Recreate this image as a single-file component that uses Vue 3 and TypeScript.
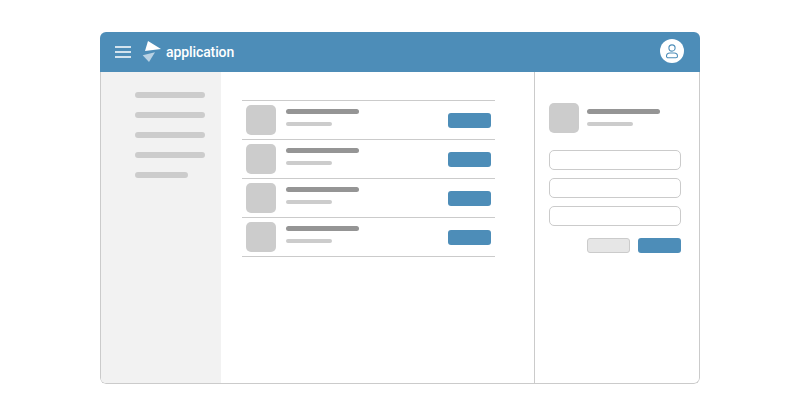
<script setup lang="ts">
const navItems: number[] = [70, 70, 70, 70, 53];
const rows: number[] = [1, 2, 3, 4];
const fields: number[] = [1, 2, 3];
</script>

<template>
  <div class="page">
    <div class="window">
      <header class="topbar">
        <div class="brand">
          <svg class="menu" width="16" height="12" viewBox="0 0 16 12" aria-hidden="true">
            <path d="M0 1h16M0 6h16M0 11h16" stroke="#fff" stroke-width="1.6" fill="none" />
          </svg>
          <svg class="logo" width="20" height="22" viewBox="0 0 20 22" aria-hidden="true">
            <path d="M6 0 L19 8 L3 10 Z" fill="#fff" />
            <path d="M0.7 14.3 L13 11.3 L7 21 Z" fill="#b8d2e4" />
          </svg>
          <span class="name">application</span>
        </div>
        <div class="avatar">
          <svg width="14" height="15" viewBox="0 0 14 15" aria-hidden="true">
            <circle cx="7" cy="4" r="3.1" fill="none" stroke="#4d8db8" stroke-width="1.1" />
            <path d="M1.5 12.2c0-2 1.6-3.2 3.4-3.2h4.2c1.8 0 3.4 1.2 3.4 3.2 0 1-.8 1.6-1.6 1.6H3.1c-.8 0-1.6-.6-1.6-1.6z" fill="none" stroke="#4d8db8" stroke-width="1.1" stroke-linejoin="round" />
          </svg>
        </div>
      </header>
      <div class="body">
        <aside class="sidebar">
          <span v-for="(w, i) in navItems" :key="i" class="nav-bar" :style="{ width: w + 'px' }"></span>
        </aside>
        <main class="content">
          <div class="list">
            <div v-for="r in rows" :key="r" class="row">
              <div class="thumb"></div>
              <div class="lines">
                <span class="line-title"></span>
                <span class="line-sub"></span>
              </div>
              <span class="btn primary"></span>
            </div>
          </div>
        </main>
        <section class="panel">
          <div class="profile">
            <div class="thumb"></div>
            <div class="lines">
              <span class="line-title"></span>
              <span class="line-sub"></span>
            </div>
          </div>
          <div class="fields">
            <div v-for="f in fields" :key="f" class="field"></div>
          </div>
          <div class="actions">
            <span class="btn secondary"></span>
            <span class="btn primary"></span>
          </div>
        </section>
      </div>
    </div>
  </div>
</template>

<style>
html, body { margin: 0; background: #fff; }
</style>

<style scoped>
.page {
  width: 800px;
  height: 416px;
  box-sizing: border-box;
  padding: 32px 100px;
  background: #fff;
}
.window {
  height: 352px;
  display: flex;
  flex-direction: column;
  border-radius: 6px;
  overflow: hidden;
}
.topbar {
  height: 40px;
  flex: none;
  background: #4d8db8;
  display: flex;
  align-items: center;
  justify-content: space-between;
  padding: 0 16px 0 15px;
}
.brand { display: flex; align-items: center; }
.menu { margin-right: 11px; }
.logo { margin-right: 4px; }
.name {
  font-family: Roboto, sans-serif;
  font-weight: 500;
  font-size: 14px;
  letter-spacing: -0.1px;
  color: #fff;
}
.avatar {
  width: 24px;
  height: 24px;
  border-radius: 50%;
  background: #fff;
  display: flex;
  align-items: center;
  justify-content: center;
  margin-bottom: 2px;
}
.body {
  flex: 1;
  display: flex;
  border: 1px solid #cbcbcb;
  border-top: 0;
  border-radius: 0 0 6px 6px;
  overflow: hidden;
}
.sidebar {
  width: 120px;
  flex: none;
  background: #f2f2f2;
  box-sizing: border-box;
  padding: 20px 0 0 34px;
  display: flex;
  flex-direction: column;
  gap: 14px;
}
.nav-bar {
  display: block;
  height: 6px;
  border-radius: 3px;
  background: #cccccc;
}
.content {
  flex: 1;
  padding: 28px 39px 0 21px;
}
.list { border-top: 1px solid #cbcbcb; }
.row {
  height: 38px;
  border-bottom: 1px solid #cbcbcb;
  display: flex;
  align-items: center;
  padding: 0 4px;
}
.thumb {
  width: 30px;
  height: 30px;
  flex: none;
  border-radius: 5px;
  background: #cccccc;
}
.lines {
  display: flex;
  flex-direction: column;
  gap: 8px;
  margin-left: 10px;
  margin-bottom: 5px;
  flex: 1;
}
.line-title {
  display: block;
  width: 73px;
  height: 5px;
  border-radius: 2.5px;
  background: #959595;
}
.line-sub {
  display: block;
  width: 46px;
  height: 4px;
  border-radius: 2px;
  background: #cccccc;
}
.btn {
  display: block;
  width: 43px;
  height: 15px;
  flex: none;
  border-radius: 3px;
  box-sizing: border-box;
}
.primary { background: #4d8db8; }
.secondary { background: #e6e6e6; border: 1px solid #cbcbcb; }
.panel {
  width: 165px;
  flex: none;
  box-sizing: border-box;
  border-left: 1px solid #cbcbcb;
  padding: 31px 18px 0 14px;
}
.profile { display: flex; align-items: flex-start; }
.profile .lines { margin: 6px 0 0 8px; }
.fields {
  display: flex;
  flex-direction: column;
  gap: 8px;
  margin-top: 17px;
}
.field {
  height: 20px;
  box-sizing: border-box;
  border: 1px solid #cbcbcb;
  border-radius: 5px;
  background: #fff;
}
.actions {
  display: flex;
  justify-content: flex-end;
  gap: 8px;
  margin-top: 12px;
}
</style>
